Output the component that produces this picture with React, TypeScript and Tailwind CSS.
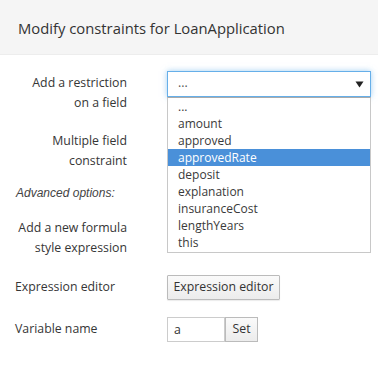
import { ChangeEvent, useState } from "react";

const FIELDS = ["...", "amount", "approved", "approvedRate", "deposit", "explanation", "insuranceCost", "lengthYears", "this"];

export default function App() {
  const [varName, setVarName] = useState("a");
  const selected = "approvedRate";

  return (
    <div className="w-[378px] h-[366px] bg-white text-[#363636] font-['Open_Sans',sans-serif] text-[12.3px] overflow-hidden">
      {/* Header */}
      <div className="h-[55px] bg-[#f5f5f5] flex items-center px-[18px] border-b border-[#ededed]">
        <h4 className="text-[14.8px] text-[#333] pt-[3px]">Modify constraints for LoanApplication</h4>
      </div>

      {/* Form rows */}
      <div className="pt-[16px]">
        <div className="flex">
          <div className="w-[127px] text-right leading-[20px] pt-[2px]">
            Add a restriction
            <br />
            on a field
          </div>
          <div className="ml-[40px] relative">
            <div className="w-[204px] h-[26px] border border-[#66afe9] shadow-[0_0_6px_rgba(102,175,233,0.6)] flex items-center justify-between pl-[10px] pr-[6px]">
              <span className="text-[#555] -mt-[2px]">...</span>
              <svg width="9" height="7" viewBox="0 0 9 7">
                <path d="M0.5 0.5h8L4.5 6.5z" fill="#222" />
              </svg>
            </div>
            {/* Open listbox */}
            <ul className="absolute left-0 top-[26px] w-[204px] bg-white border border-[#c8c8c8] border-t-[#aaa] z-10 pb-[1px] text-[12px]">
              {FIELDS.map((f) => (
                <li
                  key={f}
                  className={`h-[17px] leading-[17px] pl-[10px] ${
                    f === selected ? "bg-[#4a90d9] text-white" : "text-[#3a3a3a]"
                  }`}
                >
                  {f}
                </li>
              ))}
            </ul>
          </div>
        </div>

        <div className="w-[127px] text-right leading-[20px] mt-[18px]">
          Multiple field
          <br />
          constraint
        </div>

        <div className="pl-[16px] mt-[12px] leading-[20px] italic text-[#444] font-['Liberation_Sans',sans-serif] text-[12px]">
          Advanced options:
        </div>

        <div className="w-[127px] text-right leading-[20px] mt-[15px]">
          Add a new formula
          <br />
          style expression
        </div>

        <div className="flex items-center mt-[17px] h-[25px]">
          <div className="w-[167px] pl-[15px]">Expression editor</div>
          <button className="h-[25px] w-[113px] border border-[#bbb] rounded-[1px] bg-gradient-to-b from-[#fafafa] to-[#ececec] text-[#333] shadow-[0_1px_1px_rgba(0,0,0,0.08)]">
            Expression editor
          </button>
        </div>

        <div className="flex items-center mt-[17px] h-[25px]">
          <div className="w-[167px] pl-[15px]">Variable name</div>
          <input
            value={varName}
            onChange={(e: ChangeEvent<HTMLInputElement>) => setVarName(e.target.value)}
            className="w-[58px] h-[25px] border border-[#ccc] pl-[6px] text-[#333] outline-none"
          />
          <button className="h-[25px] w-[33px] border border-[#bbb] bg-gradient-to-b from-[#fafafa] to-[#ececec] text-[#333]">
            Set
          </button>
        </div>
      </div>
    </div>
  );
}
